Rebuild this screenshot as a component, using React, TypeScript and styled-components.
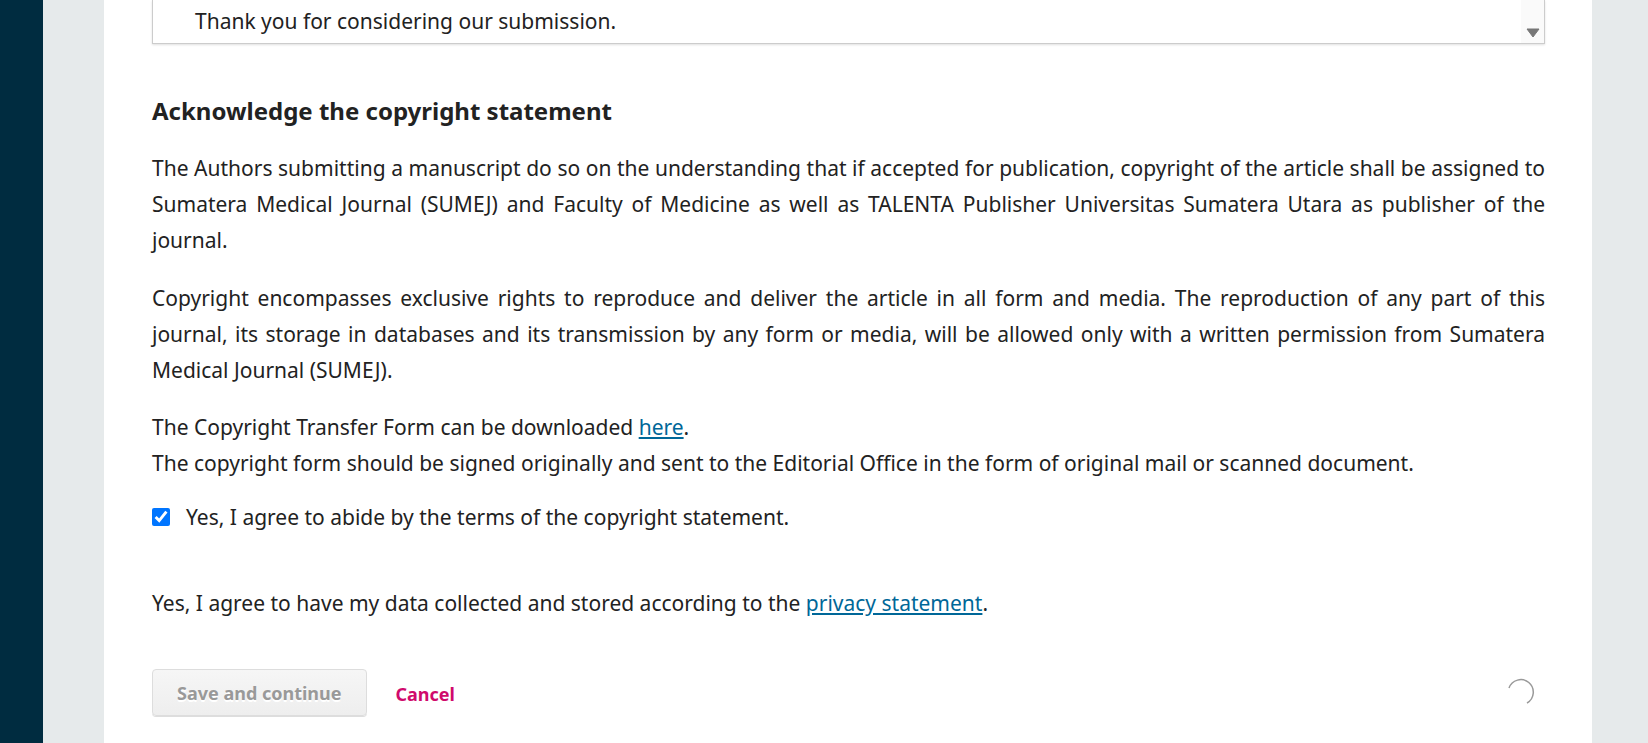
import React from 'react';
import styled, { createGlobalStyle } from 'styled-components';

const GlobalStyle = createGlobalStyle`
    html, body {
        margin: 0;
        padding: 0;
        height: 100%;
        overflow: hidden;
    }

    body {
        font-family: 'Noto Sans', 'Open Sans', sans-serif;
        color: #222;
    }
`;

const Page = styled.div`
    display: flex;
    height: 743px;
    overflow: hidden;
`;

const Sidebar = styled.aside`
    flex: 0 0 43px;
    background: #002c40;
`;

const Main = styled.main`
    flex: 1;
    display: flex;
    background: #e6eaeb;
    padding: 0 56px 0 61px;
`;

const Panel = styled.section`
    flex: 1;
    display: flex;
    flex-direction: column;
    background: #fff;
    padding: 0 47px 0 48px;
`;

// the cover letter box, scrolled so only its bottom shows
const TextBox = styled.div`
    position: relative;
    height: 43px;
    border: 1px solid #ccc;
    border-top: none;
    box-shadow: 0 1px 2px rgba(0, 0, 0, 0.12);
    padding-left: 42px;
    font-size: 21px;
    line-height: 42px;
`;

const ScrollTrack = styled.div`
    position: absolute;
    top: 0;
    right: 0;
    bottom: 0;
    width: 23px;
    background: #fafafa;
    display: flex;
    align-items: flex-end;
    justify-content: center;
    padding-bottom: 5px;
    box-sizing: border-box;
`;

const Heading = styled.h2`
    margin: 52px 0 0;
    font-size: 24px;
    line-height: 30px;
    font-weight: 700;
    color: #222;
`;

const Para = styled.p<{ $gap?: number }>`
    margin: ${(p) => p.$gap ?? 22}px 0 0;
    font-size: 21px;
    line-height: 36px;
    text-align: justify;
`;

const Link = styled.a`
    color: #006798;
    text-decoration: underline;
`;

const CheckRow = styled.label`
    display: flex;
    align-items: center;
    gap: 16px;
    margin-top: 18px;
    font-size: 21px;
    line-height: 36px;
`;

const Check = styled.input`
    width: 18px;
    height: 18px;
    margin: 0;
    accent-color: #0075ff;
`;

const Actions = styled.div`
    display: flex;
    align-items: center;
    margin-top: 48px;
`;

const SaveButton = styled.button`
    height: 47px;
    padding: 0 24px;
    border: 1px solid #ddd;
    border-radius: 4px;
    background: linear-gradient(#f6f6f6, #eee);
    box-shadow: 0 1px 0 #ddd;
    font-family: inherit;
    font-size: 18px;
    font-weight: 700;
    color: #999;
    text-shadow: 0 2px 0 #fff;
`;

const CancelLink = styled.a`
    margin-left: 29px;
    padding-top: 2px;
    font-size: 18px;
    font-weight: 700;
    color: #d00a6c;
    text-decoration: none;
`;

const Spinner = styled.svg`
    margin-left: auto;
    margin-right: 10px;
`;

const App = () => {
    return (
        <>
            <GlobalStyle />
            <Page>
                <Sidebar />
                <Main>
                    <Panel>
                        <TextBox>
                            Thank you for considering our submission.
                            <ScrollTrack>
                                <svg width="14" height="10" viewBox="0 0 14 10">
                                    <path d="M1 1 H13 L7 9 Z" fill="#777" stroke="#777" strokeLinejoin="round" />
                                </svg>
                            </ScrollTrack>
                        </TextBox>

                        <Heading>Acknowledge the copyright statement</Heading>

                        <Para $gap={24}>
                            The Authors submitting a manuscript do so on the understanding that if accepted for publication, copyright of the article shall be assigned to Sumatera Medical Journal (SUMEJ) and Faculty of Medicine as well as TALENTA Publisher Universitas Sumatera Utara as publisher of the journal.
                        </Para>
                        <Para>
                            Copyright encompasses exclusive rights to reproduce and deliver the article in all form and media. The reproduction of any part of this journal, its storage in databases and its transmission by any form or media, will be allowed only with a written permission from Sumatera Medical Journal (SUMEJ).
                        </Para>
                        <Para $gap={21}>
                            The Copyright Transfer Form can be downloaded <Link href="#">here</Link>.
                            <br />
                            The copyright form should be signed originally and sent to the Editorial Office in the form of original mail or scanned document.
                        </Para>

                        <CheckRow>
                            <Check type="checkbox" defaultChecked />
                            Yes, I agree to abide by the terms of the copyright statement.
                        </CheckRow>

                        <Para $gap={50}>
                            Yes, I agree to have my data collected and stored according to the <Link href="#">privacy statement</Link>.
                        </Para>

                        <Actions>
                            <SaveButton disabled>Save and continue</SaveButton>
                            <CancelLink href="#">Cancel</CancelLink>
                            <Spinner width="30" height="30" viewBox="0 0 30 30">
                                <path d="M4 10 A12.5 12.5 0 1 1 22 25" fill="none" stroke="#999" strokeWidth="1.5" />
                            </Spinner>
                        </Actions>
                    </Panel>
                </Main>
            </Page>
        </>
    );
};

export default App;
